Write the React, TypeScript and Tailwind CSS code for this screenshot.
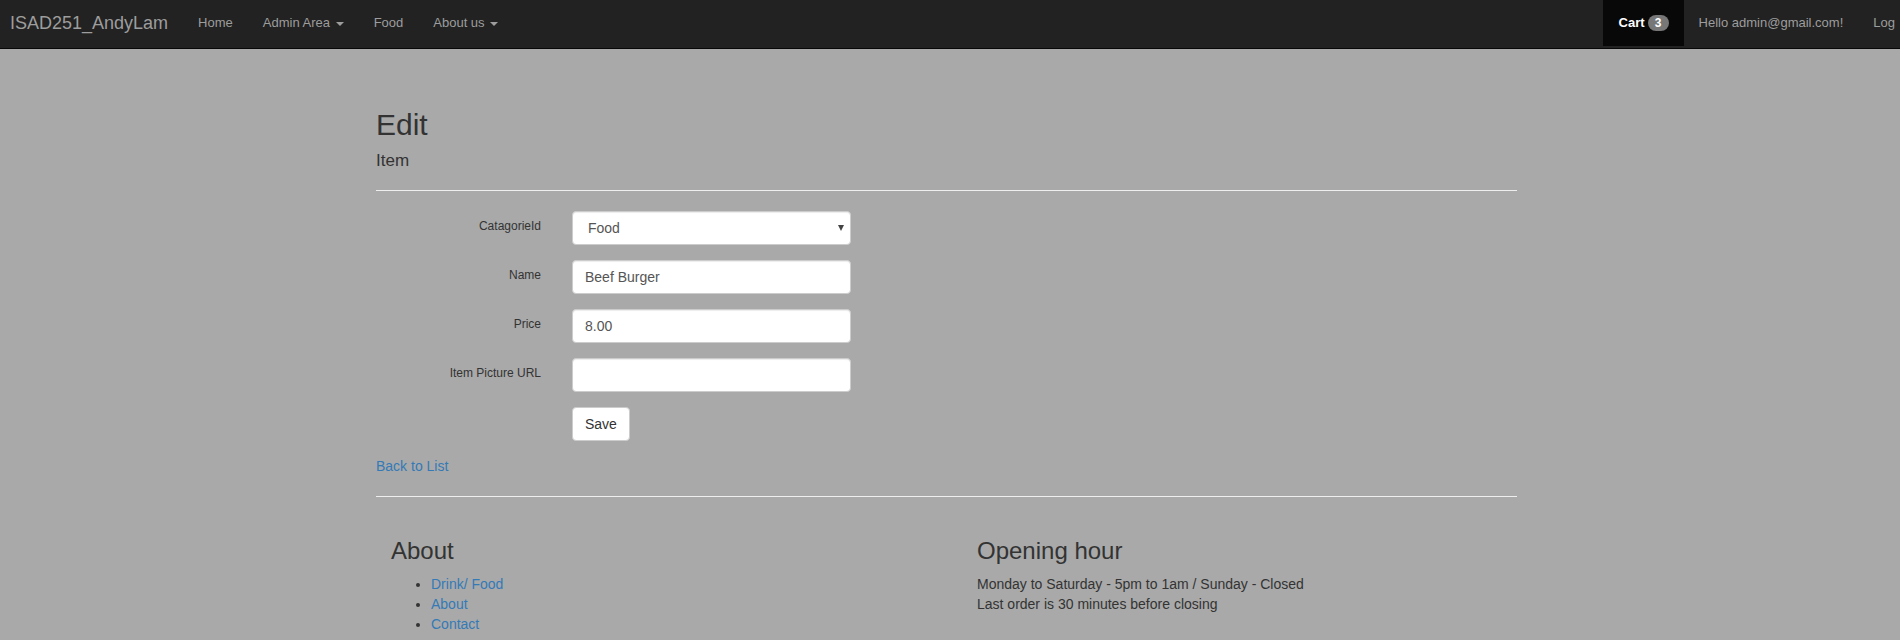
import React from "react";

function Caret() {
    return (
        <span className="inline-block w-0 h-0 ml-[2px] align-middle border-t-[4px] border-t-[#9d9d9d] border-x-[4px] border-x-transparent"></span>
    );
}

function NavBar() {
    return (
        <nav className="h-[49px] bg-[#222] border-b border-[#080808] overflow-hidden">
            <div className="w-[1900px] h-[46px] flex justify-between text-[13px] text-[#9d9d9d]">
                <div className="flex items-center">
                    <span className="pl-[10px] pr-[15px] text-[18px] leading-[20px]">ISAD251_AndyLam</span>
                    <span className="px-[15px] leading-[20px]">Home</span>
                    <span className="px-[15px] leading-[20px]">
                        Admin Area <Caret />
                    </span>
                    <span className="px-[15px] leading-[20px]">Food</span>
                    <span className="px-[15px] leading-[20px]">
                        About us <Caret />
                    </span>
                </div>
                <div className="flex items-center">
                    <div className="h-full flex items-center pl-[16px] pr-[15px] bg-[#080808]">
                        <span className="text-white font-bold leading-[20px]">Cart</span>
                        <span className="ml-[3px] w-[21px] h-[16px] rounded-full bg-[#777] text-white text-[12px] font-bold leading-[16px] text-center">
                            3
                        </span>
                    </div>
                    <span className="px-[15px] leading-[20px]">Hello admin@gmail.com!</span>
                    <span className="pl-[15px] pr-[5px] leading-[20px]">Log</span>
                </div>
            </div>
        </nav>
    );
}

function FieldRow({ label, children }: { label: string; children: React.ReactNode }) {
    return (
        <div className="flex">
            <label className="w-[165px] pt-[7px] text-right text-[12px] leading-[17px] text-[#333]">{label}</label>
            <div className="ml-[31px] w-[279px]">{children}</div>
        </div>
    );
}

const inputCls =
    "h-[34px] w-full flex items-center px-[12px] bg-white border border-[#ccc] rounded-[4px] shadow-[inset_0_1px_1px_rgba(0,0,0,0.075)] text-[14px] text-[#555]";

export default function App() {
    return (
        <div
            className="min-h-[640px] bg-[#a9a9a9] text-[14px] leading-[20px] text-[#333]"
            style={{ fontFamily: '"Liberation Sans", Arial, sans-serif' }}
        >
            <NavBar />

            <div className="pl-[376px]">
                <div className="w-[1141px]">
                    {/* Page title */}
                    <h2 className="mt-[59px] text-[30px] leading-[33px]">Edit</h2>
                    <h4 className="mt-[10px] text-[17px] leading-[19px]">Item</h4>
                    <hr className="mt-[20px] border-t border-[#eee]" />

                    {/* Form */}
                    <div className="mt-[20px] flex flex-col gap-[15px]">
                        <FieldRow label="CatagorieId">
                            <div className={`${inputCls} justify-between pl-[15px] pr-[6px]`}>
                                <span>Food</span>
                                <span className="w-0 h-0 border-t-[6px] border-t-[#444] border-x-[3px] border-x-transparent"></span>
                            </div>
                        </FieldRow>
                        <FieldRow label="Name">
                            <div className={inputCls}>Beef Burger</div>
                        </FieldRow>
                        <FieldRow label="Price">
                            <div className={inputCls}>8.00</div>
                        </FieldRow>
                        <FieldRow label="Item Picture URL">
                            <div className={inputCls}></div>
                        </FieldRow>
                        <div className="flex">
                            <div className="w-[165px]"></div>
                            <button className="ml-[31px] h-[34px] px-[12px] bg-white border border-[#ccc] rounded-[4px] text-[14px] text-[#333]">
                                Save
                            </button>
                        </div>
                    </div>

                    <div className="mt-[15px]">
                        <a className="text-[#337ab7]">Back to List</a>
                    </div>
                    <hr className="mt-[20px] border-t border-[#eee]" />

                    {/* Footer */}
                    <div className="flex mt-[41px]">
                        <div className="w-[586px] pl-[15px]">
                            <h3 className="text-[24px] leading-[26px]">About</h3>
                            <ul className="mt-[10px] pl-[40px] list-disc">
                                <li><a className="text-[#337ab7]">Drink/ Food</a></li>
                                <li><a className="text-[#337ab7]">About</a></li>
                                <li><a className="text-[#337ab7]">Contact</a></li>
                            </ul>
                        </div>
                        <div className="pl-[15px]">
                            <h3 className="text-[24px] leading-[26px]">Opening hour</h3>
                            <p className="mt-[10px]">
                                Monday to Saturday - 5pm to 1am / Sunday - Closed
                                <br />
                                Last order is 30 minutes before closing
                            </p>
                        </div>
                    </div>
                </div>
            </div>
        </div>
    );
}
